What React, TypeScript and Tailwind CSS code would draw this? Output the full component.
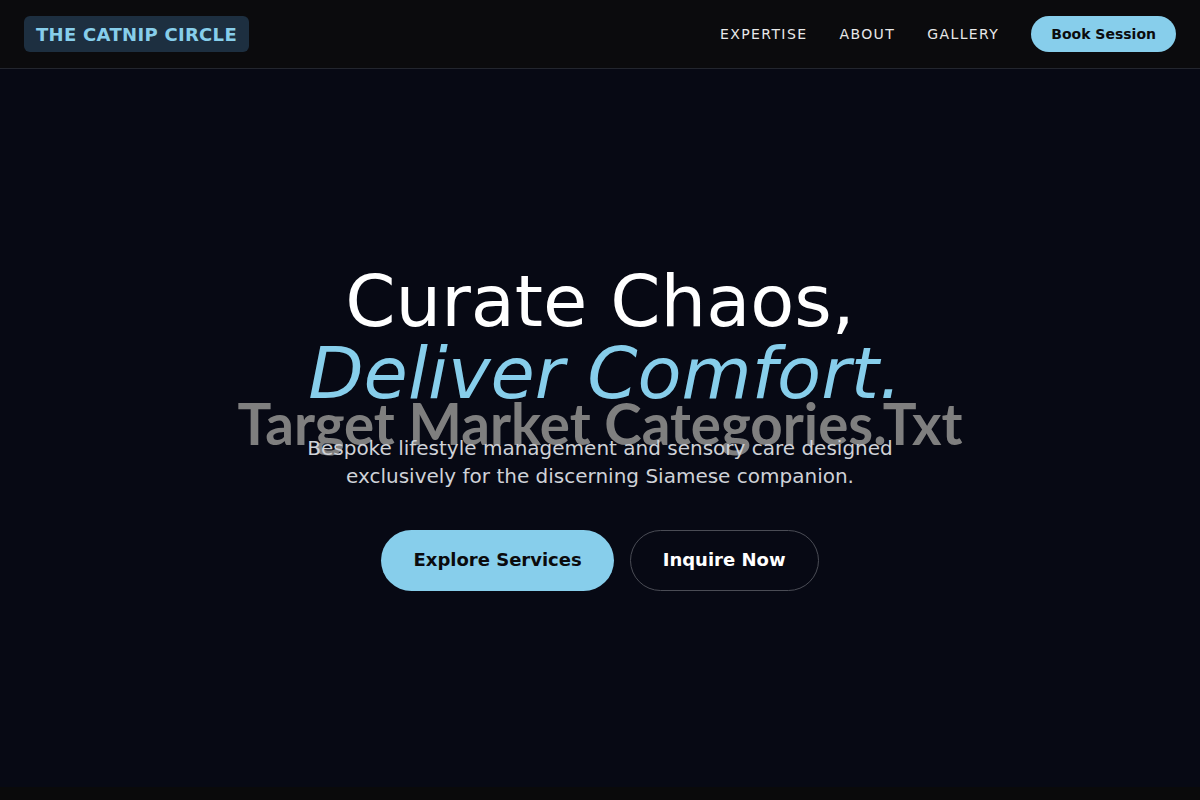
export default function App() {
  return (
    <div className="min-h-screen bg-[#070914] text-white font-['DejaVu_Sans',sans-serif]">
      <header className="h-[69px] bg-[#0b0b0d] border-b border-[#23262e] flex items-center justify-between px-6">
        <div className="bg-[#1d2f40] rounded-md px-3 h-9 flex items-center">
          <span className="text-[18px] tracking-[0.3px] font-bold text-[#87ceeb]">THE CATNIP CIRCLE</span>
        </div>
        <nav className="flex items-center">
          <a className="text-sm tracking-[0.1em] text-[#e8e8e8] mr-8">EXPERTISE</a>
          <a className="text-sm tracking-[0.1em] text-[#e8e8e8] mr-8">ABOUT</a>
          <a className="text-sm tracking-[0.1em] text-[#e8e8e8] mr-8">GALLERY</a>
          <button className="h-9 px-5 rounded-full bg-[#87ceeb] text-[#0b0b0d] text-sm font-bold">
            Book Session
          </button>
        </nav>
      </header>

      <main className="h-[718px] flex flex-col items-center pt-[196px] text-center">
        <h1 className="text-[72px] leading-none">
          <span className="block text-white">Curate Chaos,</span>
          <span className="block italic text-[#87ceeb] pl-[10px]">Deliver Comfort.</span>
        </h1>
        <div className="-mt-[14px] text-[56.5px] leading-none font-bold font-['Lato',sans-serif] text-[#7f7f7f] relative z-0">
          Target Market Categories.Txt
        </div>
        <p className="-mt-[18px] relative z-10 text-xl leading-7 text-[#cfd2d8] max-w-[620px]">
          Bespoke lifestyle management and sensory care designed exclusively for the discerning Siamese companion.
        </p>
        <div className="mt-10 flex gap-4">
          <button className="h-[61px] px-8 rounded-full bg-[#87ceeb] text-[#0b0b0d] text-lg font-bold">
            Explore Services
          </button>
          <button className="h-[61px] px-8 rounded-full border border-[#4a4c55] text-white text-lg font-bold">
            Inquire Now
          </button>
        </div>
      </main>
      <footer className="h-[13px] bg-[#0a0a0b]" />
    </div>
  );
}
